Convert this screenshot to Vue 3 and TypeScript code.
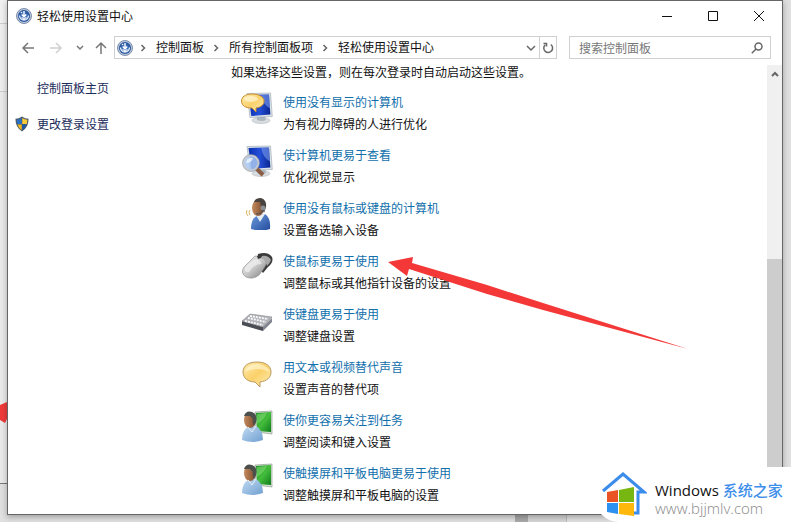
<script setup lang="ts">
type IconName = 'speech-monitor' | 'lens-monitor' | 'person' | 'mouse' | 'keyboard' | 'bubble' | 'board'

interface Setting {
  icon: IconName
  title: string
  detail: string
}

const crumbs: string[] = ['控制面板', '所有控制面板项', '轻松使用设置中心']

const settings: Setting[] = [
  { icon: 'speech-monitor', title: '使用没有显示的计算机', detail: '为有视力障碍的人进行优化' },
  { icon: 'lens-monitor', title: '使计算机更易于查看', detail: '优化视觉显示' },
  { icon: 'person', title: '使用没有鼠标或键盘的计算机', detail: '设置备选输入设备' },
  { icon: 'mouse', title: '使鼠标更易于使用', detail: '调整鼠标或其他指针设备的设置' },
  { icon: 'keyboard', title: '使键盘更易于使用', detail: '调整键盘设置' },
  { icon: 'bubble', title: '用文本或视频替代声音', detail: '设置声音的替代项' },
  { icon: 'board', title: '使你更容易关注到任务', detail: '调整阅读和键入设置' },
  { icon: 'board', title: '使触摸屏和平板电脑更易于使用', detail: '调整触摸屏和平板电脑的设置' },
]
</script>

<template>
  <div class="desktop">
    <svg class="defs" aria-hidden="true">
      <defs>
        <linearGradient id="screen" x1="0" y1="0" x2="1" y2="0">
          <stop offset="0" stop-color="#0b2fb0" /><stop offset=".5" stop-color="#2450d8" /><stop offset="1" stop-color="#0a2690" />
        </linearGradient>
        <linearGradient id="gold" x1="0" y1="0" x2="1" y2="1">
          <stop offset="0" stop-color="#fdebae" /><stop offset=".5" stop-color="#fbd06a" /><stop offset="1" stop-color="#fdf0b8" />
        </linearGradient>
        <linearGradient id="skin" x1="0" y1="0" x2="1" y2="0">
          <stop offset="0" stop-color="#c48a5e" /><stop offset="1" stop-color="#7a4a2c" />
        </linearGradient>
        <linearGradient id="shirt" x1="0" y1="0" x2="1" y2="1">
          <stop offset="0" stop-color="#c3dcf3" /><stop offset="1" stop-color="#6f9fd0" />
        </linearGradient>
        <linearGradient id="jacket" x1="0" y1="0" x2="1" y2="1">
          <stop offset="0" stop-color="#6d9ade" /><stop offset="1" stop-color="#234c9d" />
        </linearGradient>
        <linearGradient id="green" x1="0" y1="0" x2="1" y2="1">
          <stop offset="0" stop-color="#1c8e22" /><stop offset=".5" stop-color="#44bd3c" /><stop offset="1" stop-color="#0f7d1b" />
        </linearGradient>
        <linearGradient id="silver" x1="0" y1="0" x2="1" y2="1">
          <stop offset="0" stop-color="#f5f5f5" /><stop offset=".5" stop-color="#c8c8c8" /><stop offset="1" stop-color="#777" />
        </linearGradient>
        <radialGradient id="orb">
          <stop offset="0" stop-color="#4e83cc" /><stop offset="1" stop-color="#24509b" />
        </radialGradient>
        <symbol id="access" viewBox="0 0 16 16">
          <circle cx="8" cy="8" r="7.500" fill="#c0cbdc" stroke="#62769b" stroke-width=".8" />
          <circle cx="8" cy="8" r="6" fill="url(#orb)" />
          <path d="M8 3v6M5.800 6.500 8 9l2.200-2.500" stroke="#fff" stroke-width="1.400" fill="none" />
          <path d="M3.500 7.500Q4 12 8 12t4.500-4.500M5.500 9.500 8 11l2.500-1.500" stroke="#e8effa" stroke-width="1.300" fill="none" />
          <circle cx="5.500" cy="4.500" r=".8" fill="#fff" />
        </symbol>
        <symbol id="monitor" viewBox="0 0 32 32">
          <ellipse cx="20" cy="28.500" rx="9" ry="3" fill="#d9dde0" stroke="#a8afb5" stroke-width=".5" />
          <path d="m16 23 8 1 1 4q-4 2-9 0z" fill="#adb7bf" />
          <path d="M6 1.500 29.500 1l1.800 23.500L9 25.500z" fill="#dce3e9" stroke="#98a4b0" stroke-width=".6" />
          <path d="M7.500 3 28 2.500l1.400 20L10.300 24z" fill="url(#screen)" />
          <path d="M20 2.700 28 2.500l1 14Q22 13 20 2.700z" fill="#7c9cf0" opacity=".6" />
        </symbol>
      </defs>
    </svg>

    <div class="behind-left" aria-hidden="true">
      <svg viewBox="0 0 7 22" class="stray"><path d="M0 3 7 0v17l-2 4-5-3z" fill="#ef3b3b" /></svg>
    </div>
    <div class="behind-bottom" aria-hidden="true"></div>

    <main class="window">
      <header class="titlebar">
        <svg class="i16"><use href="#access" /></svg>
        <h1>轻松使用设置中心</h1>
        <div class="controls">
          <button type="button" aria-label="最小化"><svg viewBox="0 0 12 12"><path d="M1 6.500h10" /></svg></button>
          <button type="button" aria-label="最大化"><svg viewBox="0 0 12 12"><path d="M1.500 1.500h9v9h-9z" /></svg></button>
          <button type="button" aria-label="关闭"><svg viewBox="0 0 12 12"><path d="m1 1 10 10M11 1 1 11" /></svg></button>
        </div>
      </header>

      <nav class="navbar">
        <div class="history">
          <button type="button" aria-label="后退"><svg viewBox="0 0 14 14"><path d="M13 7H2m5-5L2 7l5 5" /></svg></button>
          <button type="button" aria-label="前进" class="dim"><svg viewBox="0 0 14 14"><path d="M1 7h11M7 2l5 5-5 5" /></svg></button>
          <button type="button" aria-label="最近位置" class="small"><svg viewBox="0 0 14 14"><path d="m4 5 3 3 3-3" /></svg></button>
          <button type="button" aria-label="上移"><svg viewBox="0 0 14 14"><path d="M7 13V2M2 7l5-5 5 5" /></svg></button>
        </div>
        <div class="address">
          <svg class="i16"><use href="#access" /></svg>
          <ol>
            <li v-for="crumb in crumbs" :key="crumb">
              <svg class="sep" viewBox="0 0 6 8" aria-hidden="true"><path d="m1.500 1 3 3-3 3" /></svg>
              <a href="#">{{ crumb }}</a>
            </li>
          </ol>
          <button type="button" class="drop" aria-label="以前的位置"><svg viewBox="0 0 10 10"><path d="m1 3 4 4 4-4" /></svg></button>
          <button type="button" class="refresh" aria-label="刷新">
            <svg viewBox="0 0 12 12"><path d="M8.800 2.500A4.400 4.400 0 1 1 3 3M1.500 1.500h3v3" /></svg>
          </button>
        </div>
        <div class="search">
          <input type="text" aria-label="搜索控制面板" placeholder="搜索控制面板" />
          <svg viewBox="0 0 12 12" aria-hidden="true"><circle cx="7.500" cy="4.500" r="3.500" /><path d="M5 7 .8 11.200" /></svg>
        </div>
      </nav>

      <div class="body">
        <aside class="side">
          <a href="#"><span class="mark"></span>控制面板主页</a>
          <a href="#">
            <svg class="mark" viewBox="0 0 16 18" aria-hidden="true">
              <path d="M8 .5Q11.500 3 15.500 3 15.500 13 8 17.500.5 13 .5 3 4.500 3 8 .5z" fill="#4d5b68" />
              <path d="M7.700 2Q5 4 2 4.200q0 2.800.6 4.800h5.100z" fill="#2a70c4" />
              <path d="M8.300 2Q11 4 14 4.200q0 2.800-.6 4.800H8.300z" fill="#fbcc35" />
              <path d="M2.800 9.500h4.900V16q-3.400-2-4.900-6.500z" fill="#f1b81e" />
              <path d="M13.200 9.500H8.300V16q3.400-2 4.900-6.500z" fill="#1b59ad" />
            </svg>更改登录设置</a>
        </aside>

        <section class="content">
          <p class="intro">如果选择这些设置，则在每次登录时自动启动这些设置。</p>
          <ul class="settings">
            <li v-for="item in settings" :key="item.title">
              <svg class="pic" viewBox="0 0 32 32" aria-hidden="true">
                <template v-if="item.icon === 'speech-monitor'">
                  <use href="#monitor" />
                  <path d="M11 2C4 2 .5 5 .5 9c0 5 4.500 7 10.500 7l4 4v-4c5-1 8-3 8-7 0-4-5-7-12-7z" fill="url(#gold)" stroke="#c88f32" />
                  <ellipse cx="10" cy="7" rx="7" ry="3" fill="#fffbe2" opacity=".6" />
                </template>
                <template v-else-if="item.icon === 'lens-monitor'">
                  <use href="#monitor" />
                  <path d="m15 23 7 7" stroke="#8b5d42" stroke-width="4" />
                  <circle cx="10" cy="18" r="7.500" fill="#a8c6ee" fill-opacity=".85" stroke="#c7cbd1" stroke-width="2" />
                  <path d="M5 18q1-6 7-5-1 5-7 5z" fill="#ecf6ff" opacity=".8" />
                  <circle cx="10" cy="18" r="8.500" fill="none" stroke="#7a8998" stroke-width=".5" />
                </template>
                <template v-else-if="item.icon === 'person'">
                  <path d="M10 31q0-11 6-13l8-2q6 4 5 15-9 3-19 0z" fill="url(#jacket)" />
                  <path d="m15 17 4 7 5-8z" fill="#e6edf5" />
                  <ellipse cx="17" cy="10" rx="6" ry="8" fill="url(#skin)" />
                  <path d="M13 4q1-4 7-4 6 2 5 9l-2 6-3-7-1-4z" fill="#4a4440" />
                  <circle cx="22" cy="10" r="2.500" fill="#8b9095" />
                  <path d="M22 12q-1 4-7 4" fill="none" stroke="#4a4f55" />
                  <path d="M9 12q-2 2 0 5M6 12q-2 3 1 6" fill="none" stroke="#ddb665" />
                </template>
                <template v-else-if="item.icon === 'mouse'">
                  <path d="M17 3q10-3 14 3 2 5-4 10l-5 6-6-8z" fill="#3b3b3b" />
                  <path d="M14 5q9 0 12 6-2 6-8 13-6 5-13 2-6-4-2-10 5-5 11-11z" fill="url(#silver)" stroke="#8a8a8a" stroke-width=".6" />
                  <path d="M21 5q6-1 9 4-1 3-4 6-1-6-6-8z" fill="#a9a9a9" />
                  <path d="m16 5 5-2-1 4-3 1z" fill="#393939" />
                  <path d="M4 17q6-7 12-9 3 1 5 5-8 0-13 8-5 1-4-4z" fill="#fff" opacity=".5" />
                </template>
                <template v-else-if="item.icon === 'keyboard'">
                  <path d="m1 17 21 6v4L1 21z" fill="#4b4d56" />
                  <path d="m22 23 9-9v4l-9 9z" fill="#82848f" />
                  <path d="M1 17 9 10l22 3-9 10z" fill="#b2b4ba" stroke="#777" stroke-width=".5" />
                  <path d="m4 17 18 4M7 14l18 4M9 12l18 3" stroke="#f9f9fa" stroke-width="1.800" stroke-dasharray="2 1" />
                </template>
                <template v-else-if="item.icon === 'bubble'">
                  <path d="M16 5C7 5 2 9 2 15c0 6 5 10 12 10l5 5v-5c7-1 11-4.500 11-10C30 9 25 5 16 5z" fill="url(#gold)" stroke="#b99b62" />
                  <path d="M4 15q2-8 13-8 9 1 12 8-12-6-25 0z" fill="#fff8d8" opacity=".6" />
                </template>
                <template v-else>
                  <path d="m14 2 17-1v23l-16-2z" fill="#d4dfd4" stroke="#849484" stroke-width=".6" />
                  <path d="m15 3 15-1v20l-14-1z" fill="url(#green)" />
                  <path d="m16 4 10-1q-3 7-10 11z" fill="#90e580" opacity=".5" />
                  <path d="M1 30q0-11 7-13l7-1q7 4 7 14-10 4-21 0z" fill="url(#shirt)" />
                  <ellipse cx="9" cy="10" rx="6" ry="8" fill="url(#skin)" />
                  <path d="M3 6q2-6 8-4 6 2 4 10l-2 4q-2-4-1-7L9 6z" fill="#4c504d" />
                  <path d="m7 17 4 5 4-6" fill="none" stroke="#e5f0fb" />
                </template>
              </svg>
              <div>
                <a href="#">{{ item.title }}</a>
                <p>{{ item.detail }}</p>
              </div>
            </li>
          </ul>
        </section>

        <div class="scroll">
          <button type="button" aria-label="向上滚动"><svg viewBox="0 0 10 10"><path d="m2 7 3-3 3 3" /></svg></button>
          <div class="thumb"></div>
        </div>
      </div>
    </main>

    <svg class="arrow" viewBox="0 0 302 94" aria-hidden="true">
      <path d="M0 6 25 1l-1 6 75 22 56 18 145 46-145-39-56-16-78-25-2 7z" fill="#f43838" />
    </svg>

    <div class="watermark">
      <svg viewBox="0 0 46 46" aria-hidden="true">
        <path d="M2 20 22 3l21 18h-6v21H26" fill="none" stroke="#3b8ceb" stroke-width="3" />
        <path d="m6 21 11-2v12H6z" fill="#ea5425" /><path d="m18 19 15-3v15H18z" fill="#78b711" />
        <path d="M6 32h11v11L6 41z" fill="#2c91f0" /><path d="M18 32h15v13l-15-2z" fill="#fdb80b" />
      </svg>
      <div>
        <p class="brand">Windows <span>系统之家</span></p>
        <p class="site">www.bjjmlv.com</p>
      </div>
    </div>
  </div>
</template>

<style>
body {
  margin: 0;
}
</style>

<style scoped>
* {
  box-sizing: border-box;
}
.desktop {
  position: relative;
  display: flex;
  height: 100vh;
  min-height: 522px;
  padding: 0 8px 7px 7px;
  overflow: hidden;
  background: #e0e0e0;
  color: #111;
  font: 12px/22px "Noto Sans CJK SC", sans-serif;
}
.defs {
  position: absolute;
  width: 0;
  height: 0;
}
p, h1, ul, ol {
  margin: 0;
  padding: 0;
  list-style: none;
}
a {
  color: inherit;
  text-decoration: none;
}
button {
  display: grid;
  place-items: center;
  padding: 0;
  border: 0;
  background: none;
}
button svg, .search svg, .sep {
  fill: none;
  stroke: #666;
  stroke-width: 1.5;
}
.i16 {
  flex: none;
  width: 16px;
  height: 16px;
}
.behind-left {
  position: absolute;
  left: 0;
  top: 0;
  width: 7px;
  height: 484px;
  border-bottom: 1px solid #777;
  background: linear-gradient(#f0f0f0 23px, #ccc 23px, #ccc 24px, #eee 24px, #eee 91px, #ccc 91px, #ccc 92px, #eaeaea 92px);
}
.stray {
  position: absolute;
  left: 0;
  top: 402px;
  width: 7px;
  height: 22px;
}
.behind-bottom {
  position: absolute;
  left: 515px;
  bottom: 0;
  width: 52px;
  height: 8px;
  border-right: 1px solid #bbb;
  background: linear-gradient(90deg, #a9a9a9 13px, #d6d6d6 13px);
}
.window {
  position: relative;
  display: flex;
  flex: 1;
  flex-direction: column;
  min-width: 0;
  border: 1px solid #666;
  background: #fff;
  box-shadow: 0 2px 6px rgba(0, 0, 0, .3);
}
.titlebar {
  display: flex;
  align-items: center;
  gap: 5px;
  height: 29px;
  padding-left: 8px;
}
h1 {
  font-size: 12px;
  font-weight: 400;
}
.controls {
  display: flex;
  margin-left: auto;
}
.controls button {
  width: 46px;
  height: 29px;
}
.controls svg {
  width: 12px;
  height: 12px;
  stroke: #111;
  stroke-width: 1;
}
.navbar {
  display: flex;
  align-items: center;
  padding: 6px 11px 0 0;
}
.history {
  display: flex;
  width: 106px;
  padding-left: 7px;
}
.history button {
  width: 26px;
}
.history button:nth-child(2) {
  width: 30px;
}
.history .small {
  width: 18px;
}
.history button:last-child {
  width: 23px;
}
.history svg {
  flex: none;
  width: 14px;
  height: 14px;
  stroke: #777;
}
.history .dim svg {
  stroke: #d0d0d0;
}
.address {
  display: flex;
  flex: 1;
  align-items: center;
  min-width: 0;
  height: 23px;
  padding-left: 2px;
  border: 1px solid #d0d0d0;
  line-height: 20px;
}
ol, ol li {
  display: flex;
  align-items: center;
}
ol {
  flex: 1;
  padding-left: 7px;
}
ol li {
  padding-right: 9px;
  white-space: nowrap;
}
ol a {
  padding-bottom: 1px;
}
.sep {
  width: 6px;
  height: 8px;
  margin-right: 10px;
}
.drop, .refresh {
  width: 17px;
  height: 21px;
}
.refresh {
  border-left: 1px solid #d0d0d0;
}
.drop svg {
  width: 10px;
  height: 10px;
}
.refresh svg, .search svg {
  width: 12px;
  height: 12px;
}
.search {
  display: flex;
  align-items: center;
  width: 202px;
  height: 23px;
  margin-left: 12px;
  padding: 0 7px 0 9px;
  border: 1px solid #d0d0d0;
}
.search input {
  flex: 1;
  min-width: 0;
  padding: 0;
  border: 0;
  outline: 0;
  background: none;
  font: inherit;
}
.search input::placeholder {
  color: #777;
  opacity: 1;
}
.body {
  display: flex;
  flex: 1;
  min-height: 0;
  padding-top: 6px;
  overflow: hidden;
}
.side {
  display: flex;
  flex-direction: column;
  gap: 14px;
  width: 223px;
  padding: 12px 0 0 7px;
  color: #1c2c5a;
}
.side a {
  display: flex;
  align-items: center;
  gap: 8px;
}
.mark {
  width: 14px;
  height: 16px;
}
.content {
  flex: 1;
  min-width: 0;
}
.intro {
  line-height: 14px;
}
.settings {
  display: grid;
  gap: 9px;
  padding: 12px 0 0 10px;
}
.settings li {
  display: flex;
  gap: 10px;
}
.settings a {
  display: block;
  width: fit-content;
  color: #1170ac;
}
.pic {
  flex: none;
  width: 32px;
  height: 32px;
  margin-top: 1px;
}
.scroll {
  display: flex;
  flex-direction: column;
  gap: 176px;
  width: 15px;
  background: #f0f0f0;
}
.scroll button {
  width: 15px;
  height: 18px;
}
.scroll button svg {
  width: 10px;
  height: 10px;
  stroke-width: 2;
}
.thumb {
  flex: 1;
  background: #cdcdcd;
}
.arrow {
  position: absolute;
  left: 388px;
  top: 256px;
  width: 302px;
  height: 94px;
}
.watermark {
  position: absolute;
  right: 0;
  bottom: 0;
  display: flex;
  gap: 8px;
  width: 196px;
  height: 55px;
  padding: 4px 0 0 6px;
  border-bottom-left-radius: 24px;
  background: #fff;
}
.watermark svg {
  flex: none;
  width: 46px;
  height: 46px;
}
.watermark p {
  white-space: nowrap;
}
.brand {
  padding-top: 10px;
  color: #111;
  font: 500 15px/18px "Open Sans", "Noto Sans CJK SC", sans-serif;
}
.brand span {
  color: #3d8eea;
}
.site {
  color: #888;
  font: 300 15px/18px "Open Sans", sans-serif;
}
</style>
